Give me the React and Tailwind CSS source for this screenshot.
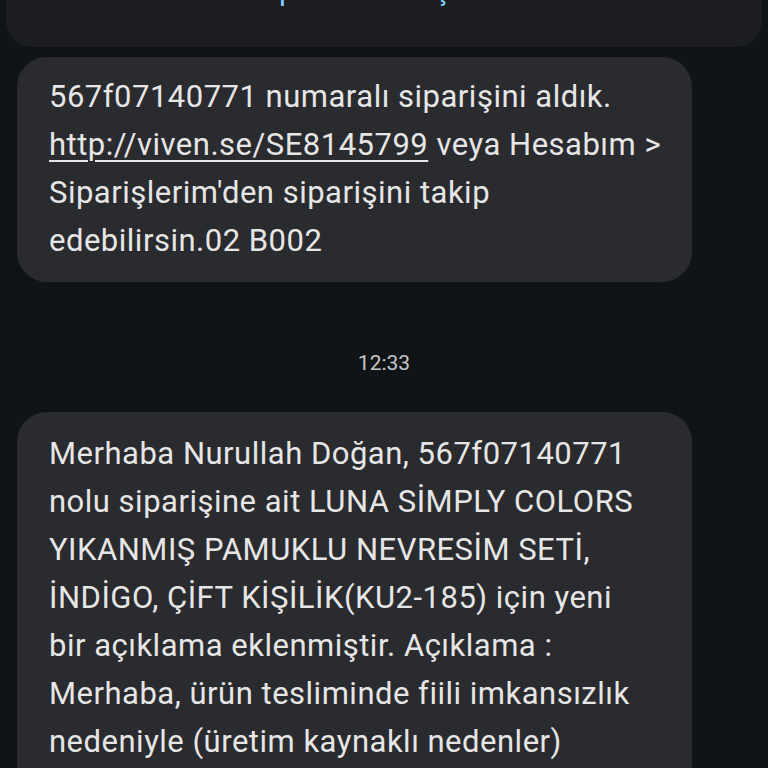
const first = [
  <>567f07140771 numaralı siparişini aldık.</>,
  <>
    <span className="underline decoration-2 underline-offset-[5px]">http://viven.se/SE8145799</span> veya Hesabım &gt;
  </>,
  <>Siparişlerim'den siparişini takip</>,
  <>edebilirsin.02 B002</>,
];

const second = [
  'Merhaba Nurullah Doğan, 567f07140771',
  'nolu siparişine ait LUNA SİMPLY COLORS',
  'YIKANMIŞ PAMUKLU NEVRESİM SETİ,',
  'İNDİGO, ÇİFT KİŞİLİK(KU2-185) için yeni',
  'bir açıklama eklenmiştir. Açıklama :',
  'Merhaba, ürün tesliminde fiili imkansızlık',
  'nedeniyle (üretim kaynaklı nedenler)',
  'ürününüz tedarik edilememektedir.',
];

function Bubble({ lines, className }) {
  return (
    <div className={`w-[675px] rounded-[30px] bg-[#2a2b2e] pl-[32px] ${className}`}>
      <div className="text-[31px] leading-[48px] tracking-[0.5px]">
        {lines.map((l, i) => (
          <div key={i} className="whitespace-nowrap">
            {l}
          </div>
        ))}
      </div>
    </div>
  );
}

export default function App() {
  return (
    <div
      className="h-[768px] w-[768px] overflow-hidden bg-[#111417] text-[#e6e6e6]"
      style={{ fontFamily: 'Roboto, "Liberation Sans", sans-serif' }}
    >
      {/* previous message, cut off at the top */}
      <div className="relative mx-[6px] h-[47px] overflow-hidden rounded-b-[26px] bg-[#1b1d20]">
        <span className="absolute left-[273px] top-[-25px] text-[30px] leading-none text-[#7fcfff]">p</span>
        <span className="absolute left-[428px] top-[-25px] text-[30px] leading-none text-[#7fcfff]">ş</span>
      </div>

      <div className="px-[17px] pt-[10px]">
        <Bubble lines={first} className="pt-[16px] pb-[17px]" />
      </div>

      <div className="pt-[69px] pb-[37px] text-center text-[21px] leading-[24px] text-[#c4c6c8]">12:33</div>

      <div className="px-[17px]">
        <Bubble lines={second} className="pt-[18px] pb-[17px]" />
      </div>
    </div>
  );
}
